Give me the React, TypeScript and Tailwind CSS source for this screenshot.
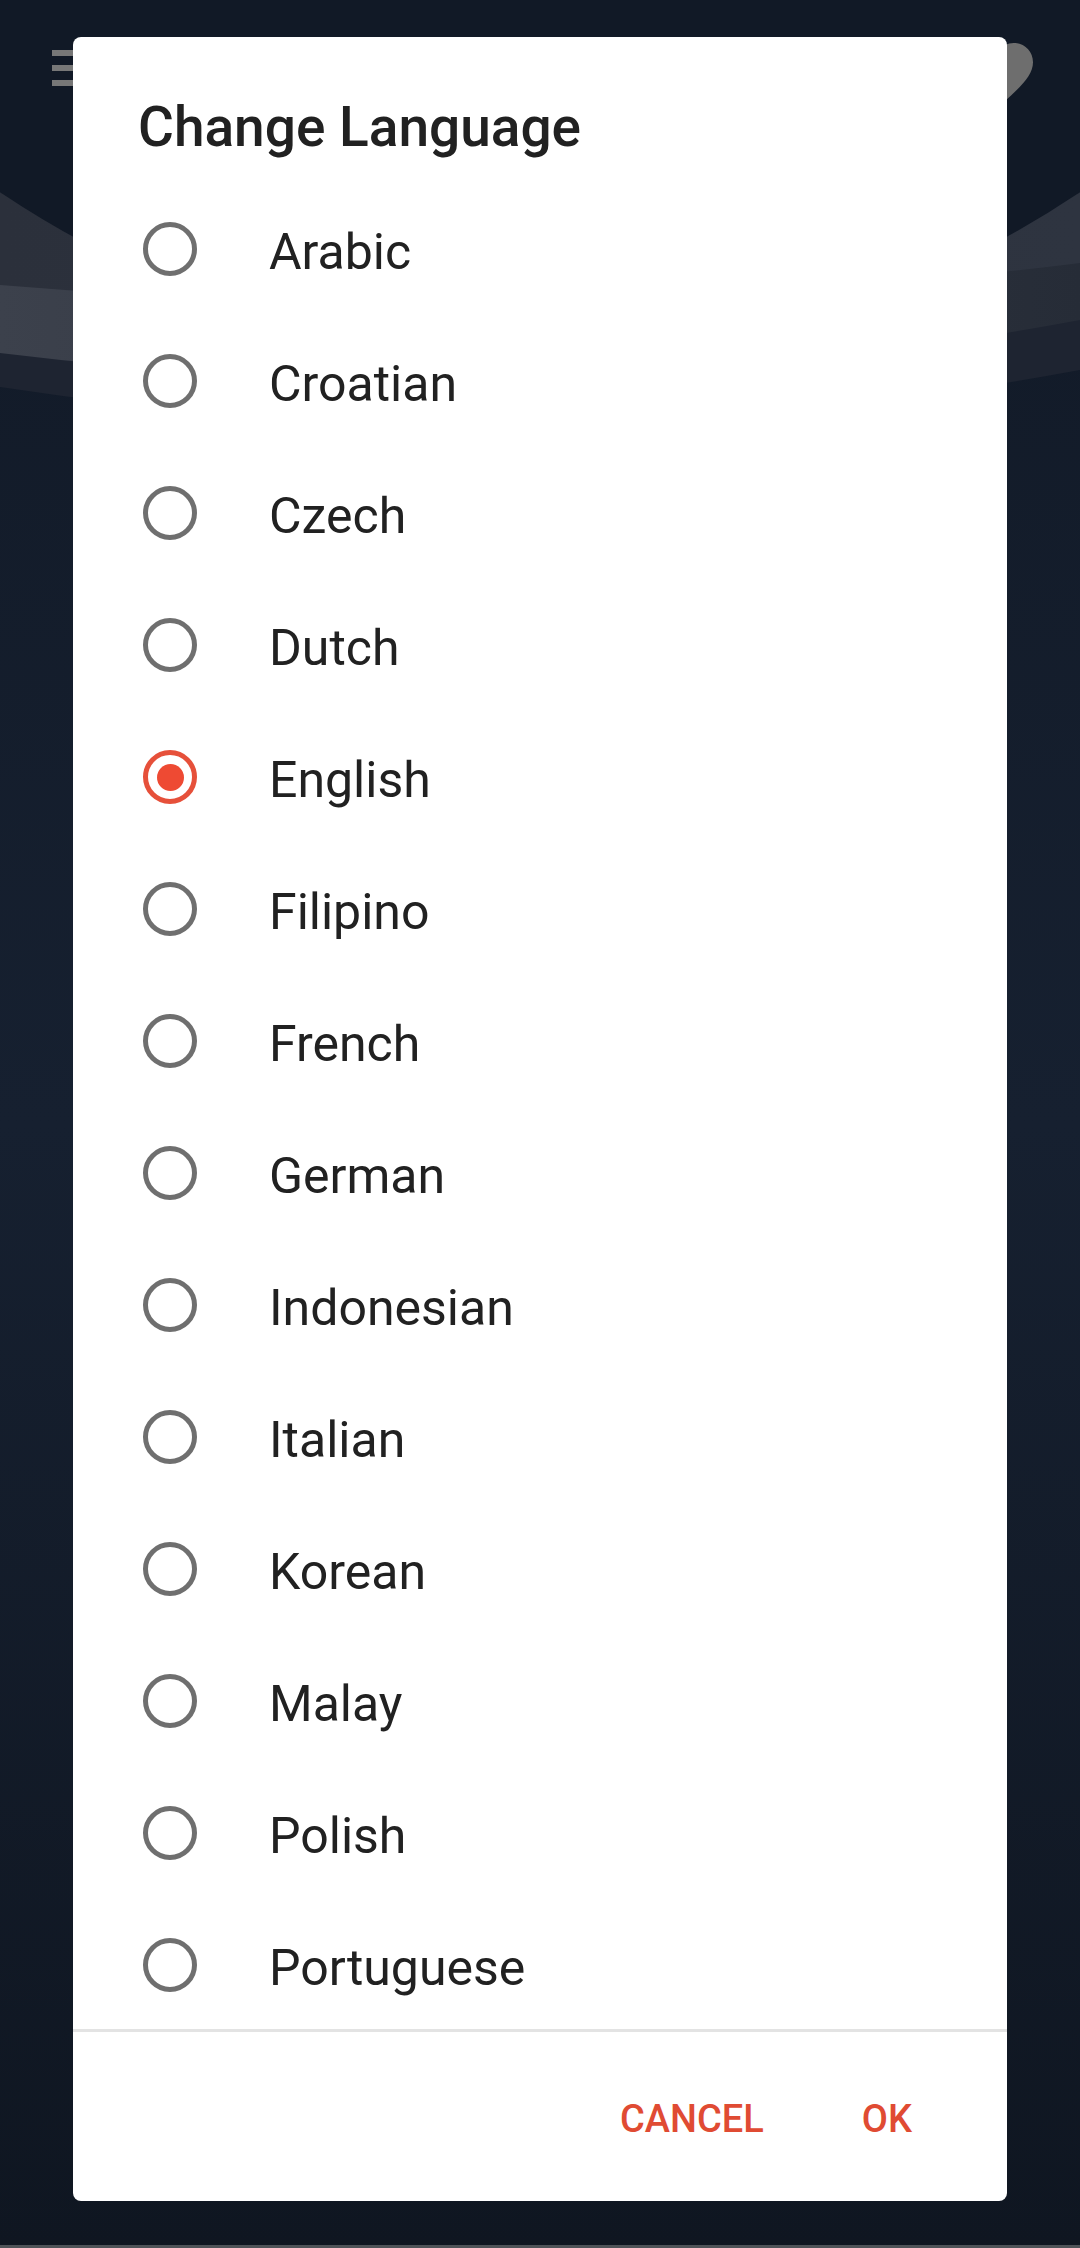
import React from "react";

const languages = [
  "Arabic",
  "Croatian",
  "Czech",
  "Dutch",
  "English",
  "Filipino",
  "French",
  "German",
  "Indonesian",
  "Italian",
  "Korean",
  "Malay",
  "Polish",
  "Portuguese",
];

function Background() {
  return (
    <svg
      className="absolute inset-0"
      width="1080"
      height="2248"
      viewBox="0 0 1080 2248"
      aria-hidden="true"
    >
      <defs>
        <linearGradient id="bg" x1="0" y1="0" x2="0" y2="1">
          <stop offset="0" stopColor="#111926" />
          <stop offset="0.5" stopColor="#162030" />
          <stop offset="1" stopColor="#0f1621" />
        </linearGradient>
        <linearGradient id="bandB" x1="0" y1="0" x2="1" y2="0">
          <stop offset="0" stopColor="#3c414c" />
          <stop offset="1" stopColor="#262c37" />
        </linearGradient>
        <linearGradient id="bandA" x1="0" y1="0" x2="1" y2="0">
          <stop offset="0" stopColor="#2b303b" />
          <stop offset="1" stopColor="#2e3440" />
        </linearGradient>
      </defs>
      <rect x="0" y="0" width="1080" height="2248" fill="url(#bg)" />
      <path d="M0,0 L1080,0 L1080,370 Q540,470 0,387 Z" fill="#1e2431" />
      <path d="M0,0 L1080,0 L1080,320 Q540,420 0,353 Z" fill="url(#bandB)" />
      <path d="M0,0 L1080,0 L1080,263 Q540,330 0,285 Z" fill="url(#bandA)" />
      <circle cx="540" cy="-610" r="967" fill="#111926" />
      {/* hamburger */}
      <rect x="52" y="50" width="42" height="6" fill="#777777" />
      <rect x="52" y="65" width="42" height="6" fill="#777777" />
      <rect x="52" y="80" width="42" height="6" fill="#777777" />
      {/* heart */}
      <g transform="translate(956 32.5) scale(3.5)">
        <path
          d="M12 21.35l-1.45-1.32C5.4 15.36 2 12.28 2 8.5 2 5.42 4.42 3 7.5 3c1.74 0 3.41.81 4.5 2.09C13.09 3.81 14.76 3 16.5 3 19.58 3 22 5.42 22 8.5c0 3.78-3.4 6.860-8.55 11.54L12 21.35z"
          fill="#6e6e6e"
        />
      </g>
      <rect x="0" y="2245" width="1080" height="3" fill="#4f5358" />
    </svg>
  );
}

function Radio({ checked }: { checked: boolean }) {
  return (
    <div
      className={
        checked
          ? "w-[54px] h-[54px] rounded-full border-[5px] border-[#e6503a] flex items-center justify-center shrink-0"
          : "w-[54px] h-[54px] rounded-full border-[5px] border-[#6f6f6f] shrink-0"
      }
    >
      {checked && <div className="w-[27px] h-[27px] rounded-full bg-[#ee4a33]" />}
    </div>
  );
}

export default function App() {
  return (
    <div
      className="relative w-[1080px] h-[2248px] overflow-hidden"
      style={{ fontFamily: "Roboto, 'Noto Sans', sans-serif" }}
    >
      <Background />
      <div className="relative pt-[37px] px-[73px]">
        <div className="h-[2164px] bg-white rounded-[8px] flex flex-col overflow-hidden">
          <div className="pt-[58px] pl-[65px] h-[146px]">
            <h1 className="text-[55px] leading-[64px] font-medium text-[#212121]">
              Change Language
            </h1>
          </div>
          <div className="h-[1846px] overflow-hidden">
            {languages.map((l) => (
              <div key={l} className="h-[132px] flex items-center pl-[70px]">
                <Radio checked={l === "English"} />
                <span className="ml-[72px] mt-[5px] text-[50px] leading-[60px] text-[#212121]">
                  {l}
                </span>
              </div>
            ))}
          </div>
          <div className="h-[3px] bg-[#e3e3e3]" />
          <div className="flex-1 flex items-center justify-end pt-[6px] pr-[95px] gap-[98px]">
            <span className="text-[38px] font-medium text-[#e04b33]">CANCEL</span>
            <span className="text-[38px] font-medium text-[#e04b33]">OK</span>
          </div>
        </div>
      </div>
    </div>
  );
}
